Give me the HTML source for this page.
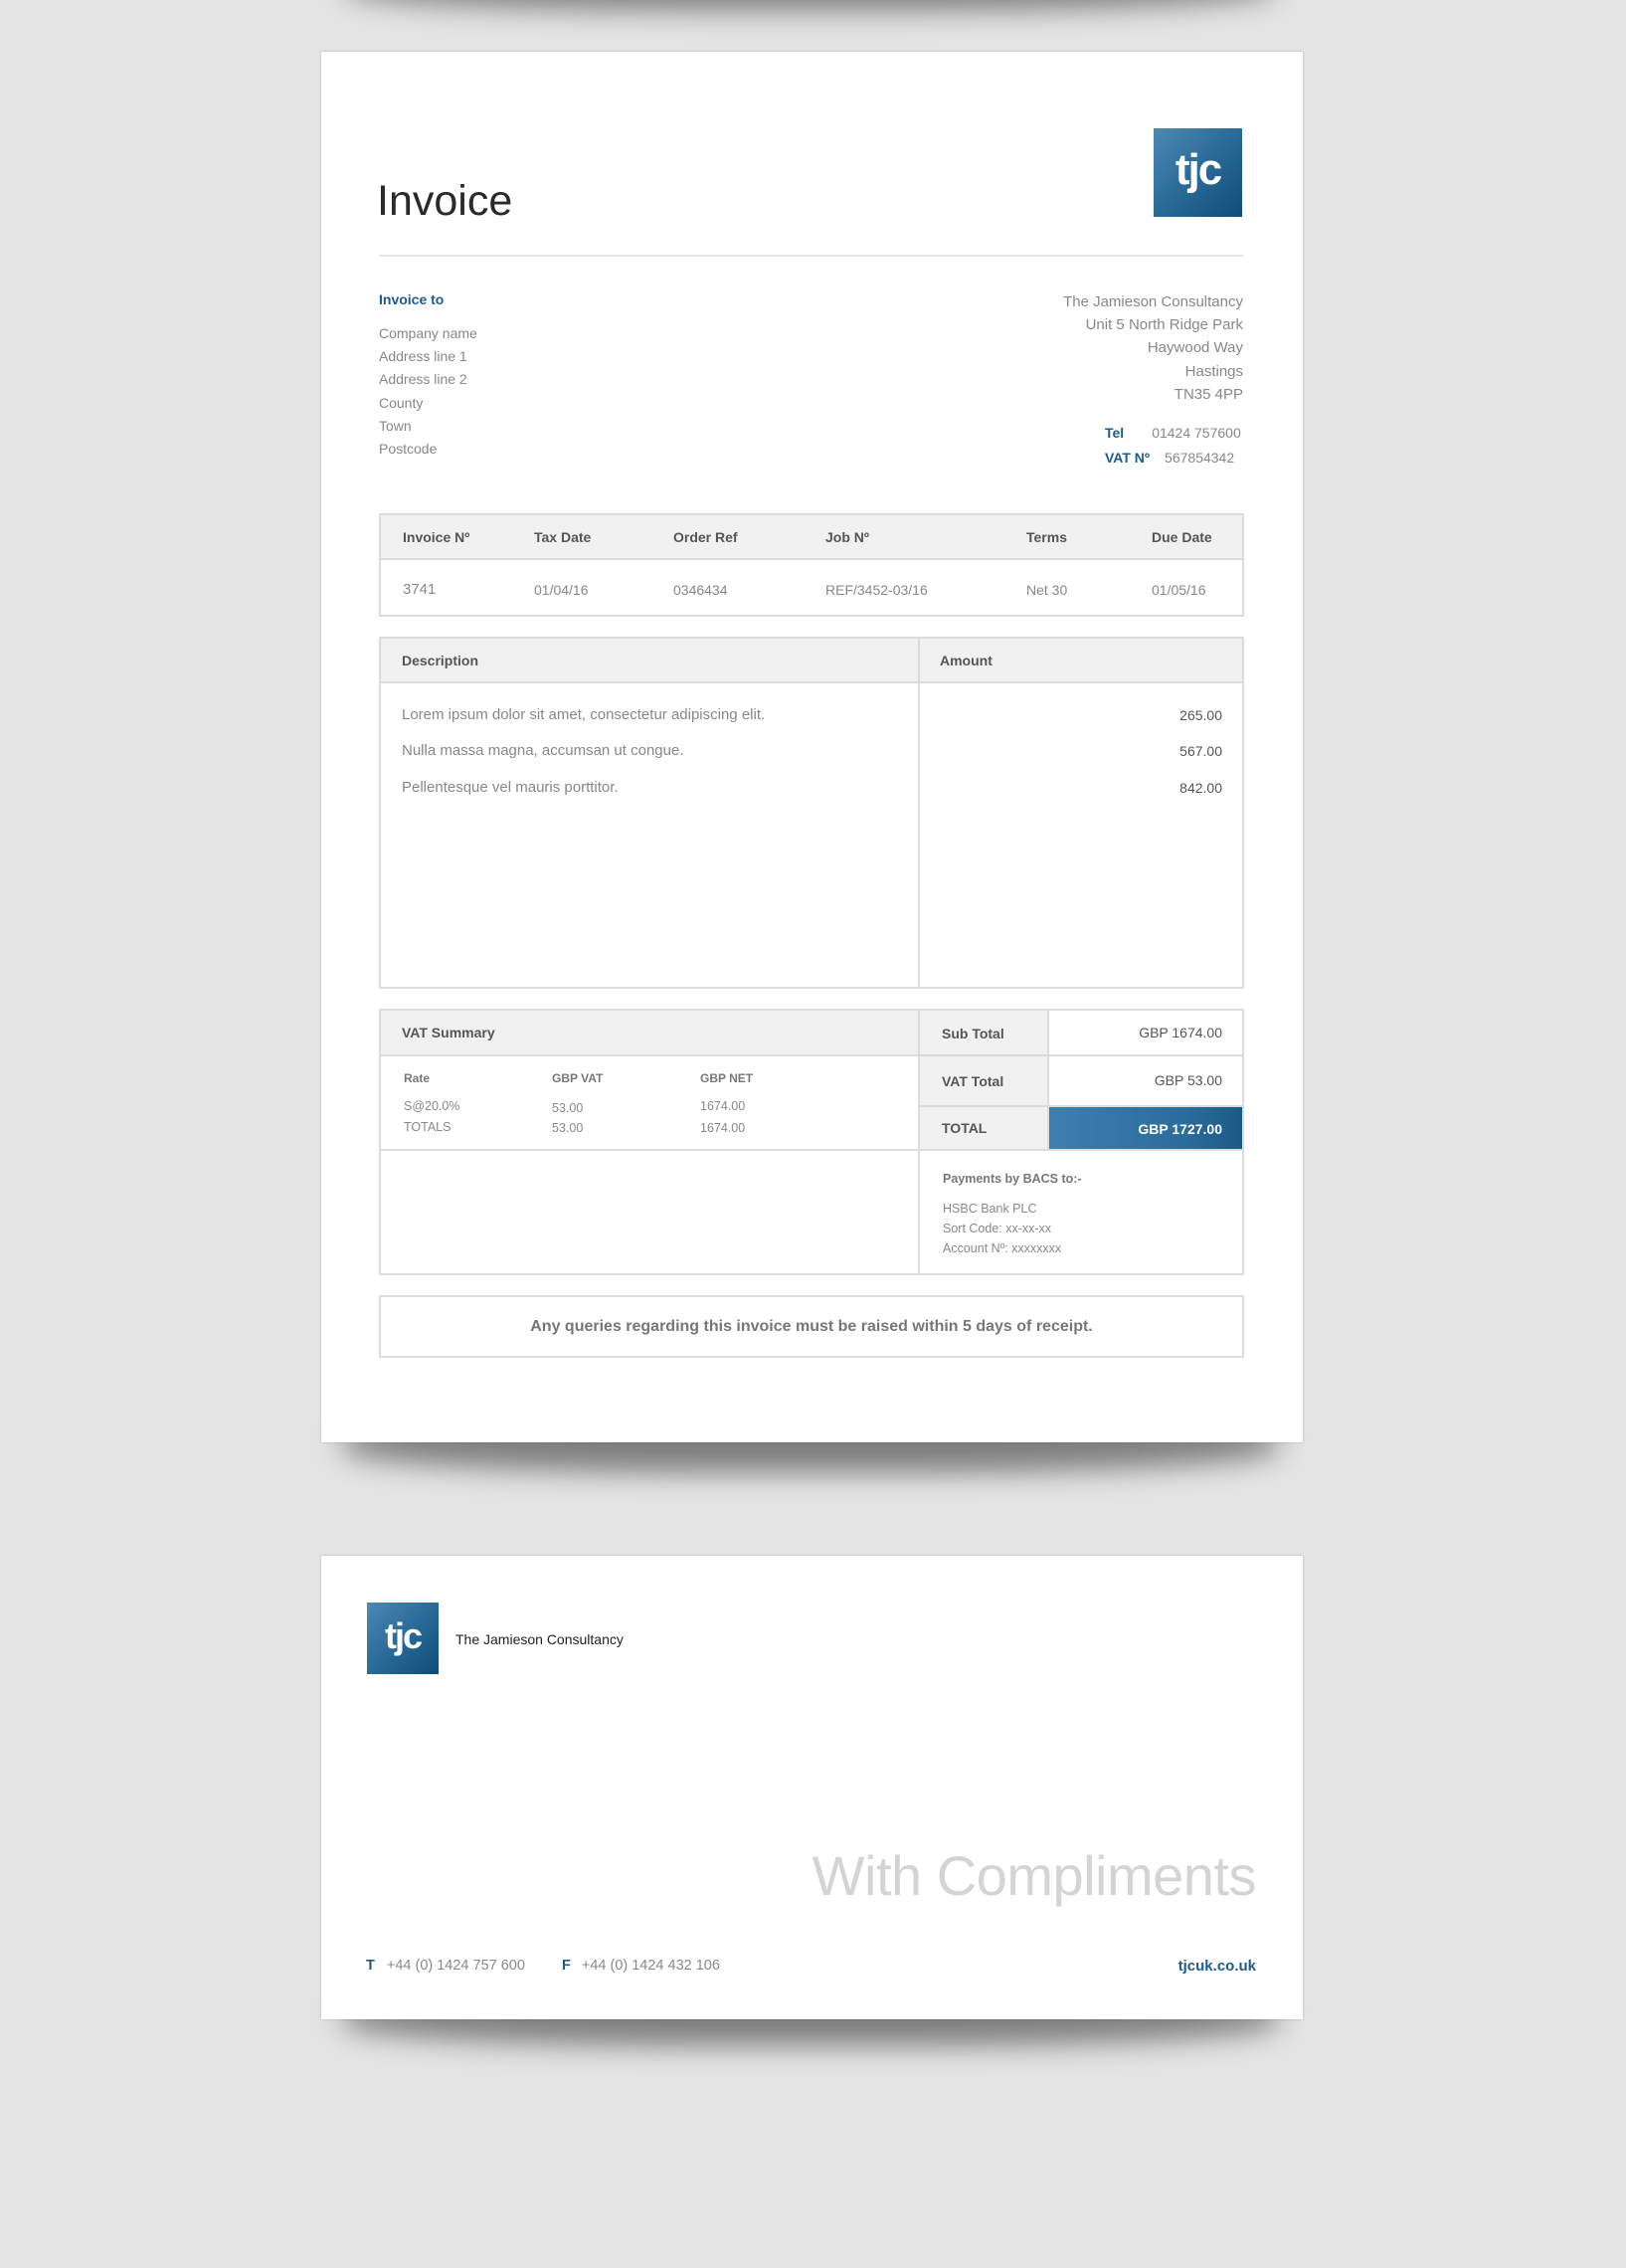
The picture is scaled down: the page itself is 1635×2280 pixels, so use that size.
<!DOCTYPE html>
<html><head><meta charset="utf-8"><style>
*{margin:0;padding:0;box-sizing:border-box}
body{width:1635px;height:2280px;background:#e4e4e4;position:relative;overflow:hidden;font-family:"Liberation Sans",sans-serif;color:#777}
.a{position:absolute;white-space:nowrap}
.page{position:absolute;background:#fff;box-shadow:0 0 2px rgba(0,0,0,.25)}
.sh{position:absolute;background:rgba(0,0,0,.45);filter:blur(14px);border-radius:40%}
.logo{position:absolute;background:linear-gradient(135deg,#4d89b3 0%,#2a6a98 50%,#0e4c76 100%);color:#fff;font-weight:bold;text-align:center;letter-spacing:-2px}
.bx{position:absolute;border:2px solid #dcdcdc}
.hd{position:absolute;background:#f1f1f2}
.ln{position:absolute;background:#dcdcdc}
.b{font-weight:bold;color:#555}
.blue{color:#1e5a8c}
.g{color:#888}
</style></head><body>
<div class="sh" style="left:350px;top:-40px;width:930px;height:50px"></div>
<div class="sh" style="left:345px;top:1420px;width:940px;height:60px"></div>
<div class="sh" style="left:345px;top:2000px;width:940px;height:56px"></div>

<div class="page" style="left:323px;top:52px;width:987px;height:1398px"></div>
<div class="a" style="left:379px;top:178px;font-size:43px;color:#2a2a2a">Invoice</div>
<div class="logo" style="left:1160px;top:129px;width:89px;height:89px;font-size:44px;line-height:84px">tjc</div>
<div class="ln" style="left:381px;top:256px;width:869px;height:2px;background:#e6e6e6"></div>

<div class="a blue" style="left:381px;top:293px;font-size:14px;font-weight:bold">Invoice to</div>
<div class="a g" style="left:381px;top:324px;font-size:14px;line-height:23.2px">Company name<br>Address line 1<br>Address line 2<br>County<br>Town<br>Postcode</div>
<div class="a g" style="right:385px;top:292px;font-size:15px;line-height:23.2px;text-align:right">The Jamieson Consultancy<br>Unit 5 North Ridge Park<br>Haywood Way<br>Hastings<br>TN35 4PP</div>
<div class="a" style="left:1111px;top:427px;font-size:14px"><b class="blue">Tel</b><span class="g" style="margin-left:28px">01424 757600</span></div>
<div class="a" style="left:1111px;top:452px;font-size:14px"><b class="blue">VAT Nº</b><span class="g" style="margin-left:15px">567854342</span></div>

<!-- table 1 -->
<div class="bx" style="left:381px;top:516px;width:870px;height:104px"></div>
<div class="hd" style="left:383px;top:518px;width:866px;height:43px"></div>
<div class="ln" style="left:383px;top:561px;width:866px;height:2px"></div>
<div class="a b" style="left:405px;top:532px;font-size:14px">Invoice Nº</div>
<div class="a b" style="left:537px;top:532px;font-size:14px">Tax Date</div>
<div class="a b" style="left:677px;top:532px;font-size:14px">Order Ref</div>
<div class="a b" style="left:830px;top:532px;font-size:14px">Job Nº</div>
<div class="a b" style="left:1032px;top:532px;font-size:14px">Terms</div>
<div class="a b" style="left:1158px;top:532px;font-size:14px">Due Date</div>
<div class="a g" style="left:405px;top:584px;font-size:15px">3741</div>
<div class="a g" style="left:537px;top:585px;font-size:14px">01/04/16</div>
<div class="a g" style="left:677px;top:585px;font-size:14px">0346434</div>
<div class="a g" style="left:830px;top:585px;font-size:14px">REF/3452-03/16</div>
<div class="a g" style="left:1032px;top:585px;font-size:14px">Net 30</div>
<div class="a g" style="left:1158px;top:585px;font-size:14px">01/05/16</div>

<!-- table 2 -->
<div class="bx" style="left:381px;top:640px;width:870px;height:354px"></div>
<div class="hd" style="left:383px;top:642px;width:866px;height:43px"></div>
<div class="ln" style="left:383px;top:685px;width:866px;height:2px"></div>
<div class="ln" style="left:923px;top:642px;width:2px;height:350px"></div>
<div class="a b" style="left:404px;top:656px;font-size:14px">Description</div>
<div class="a b" style="left:945px;top:656px;font-size:14px">Amount</div>
<div class="a g" style="left:404px;top:710px;font-size:15px">Lorem ipsum dolor sit amet, consectetur adipiscing elit.</div>
<div class="a g" style="left:404px;top:746px;font-size:15px">Nulla massa magna, accumsan ut congue.</div>
<div class="a g" style="left:404px;top:783px;font-size:15px">Pellentesque vel mauris porttitor.</div>
<div class="a" style="right:406px;top:711px;font-size:14px;color:#555">265.00</div>
<div class="a" style="right:406px;top:747px;font-size:14px;color:#555">567.00</div>
<div class="a" style="right:406px;top:784px;font-size:14px;color:#555">842.00</div>

<!-- table 3 -->
<div class="bx" style="left:381px;top:1014px;width:870px;height:268px"></div>
<div class="hd" style="left:383px;top:1016px;width:540px;height:44px"></div>
<div class="ln" style="left:383px;top:1060px;width:540px;height:2px"></div>
<div class="hd" style="left:925px;top:1016px;width:128px;height:139px"></div>
<div class="ln" style="left:923px;top:1016px;width:2px;height:264px"></div>
<div class="ln" style="left:1053px;top:1016px;width:2px;height:140px"></div>
<div class="ln" style="left:925px;top:1060px;width:324px;height:2px"></div>
<div class="ln" style="left:925px;top:1111px;width:324px;height:2px"></div>
<div class="ln" style="left:383px;top:1155px;width:866px;height:2px"></div>
<div style="position:absolute;left:1055px;top:1113px;width:194px;height:42px;background:linear-gradient(90deg,#3f7fad,#2c6c9a 70%,#1b5a86)"></div>
<div class="a b" style="left:404px;top:1030px;font-size:14px">VAT Summary</div>
<div class="a b" style="left:947px;top:1031px;font-size:14px">Sub Total</div>
<div class="a b" style="left:947px;top:1079px;font-size:14px">VAT Total</div>
<div class="a b" style="left:947px;top:1126px;font-size:14px">TOTAL</div>
<div class="a" style="right:406px;top:1030px;font-size:14px;color:#555">GBP 1674.00</div>
<div class="a" style="right:406px;top:1078px;font-size:14px;color:#555">GBP 53.00</div>
<div class="a" style="right:406px;top:1127px;font-size:14px;color:#fff;font-weight:bold">GBP 1727.00</div>
<div class="a b" style="left:406px;top:1077px;font-size:12px;color:#777">Rate</div>
<div class="a b" style="left:555px;top:1077px;font-size:12px;color:#777">GBP VAT</div>
<div class="a b" style="left:704px;top:1077px;font-size:12px;color:#777">GBP NET</div>
<div class="a g" style="left:406px;top:1105px;font-size:12.5px">S@20.0%</div>
<div class="a g" style="left:555px;top:1107px;font-size:12.5px">53.00</div>
<div class="a g" style="left:704px;top:1105px;font-size:12.5px">1674.00</div>
<div class="a g" style="left:406px;top:1126px;font-size:12.5px">TOTALS</div>
<div class="a g" style="left:555px;top:1127px;font-size:12.5px">53.00</div>
<div class="a g" style="left:704px;top:1127px;font-size:12.5px">1674.00</div>
<div class="a b" style="left:948px;top:1178px;font-size:12.5px;color:#777">Payments by BACS to:-</div>
<div class="a g" style="left:948px;top:1205px;font-size:12.5px;line-height:20px">HSBC Bank PLC<br>Sort Code: xx-xx-xx<br>Account Nº: xxxxxxxx</div>

<div class="bx" style="left:381px;top:1302px;width:870px;height:63px"></div>
<div class="a" style="left:381px;width:870px;top:1325px;font-size:16px;font-weight:bold;color:#777;text-align:center">Any queries regarding this invoice must be raised within 5 days of receipt.</div>

<!-- page 2 -->
<div class="page" style="left:323px;top:1564px;width:987px;height:466px"></div>
<div class="logo" style="left:369px;top:1611px;width:72px;height:72px;font-size:36px;line-height:68px">tjc</div>
<div class="a" style="left:458px;top:1640px;font-size:14px;color:#222">The Jamieson Consultancy</div>
<div class="a" style="right:372px;top:1853px;font-size:56px;color:#d4d4d4;letter-spacing:-0.5px">With Compliments</div>
<div class="a" style="left:368px;top:1968px;font-size:14.5px"><b class="blue">T</b><span class="g" style="margin-left:12px">+44 (0) 1424 757 600</span></div>
<div class="a" style="left:565px;top:1968px;font-size:14.5px"><b class="blue">F</b><span class="g" style="margin-left:11px">+44 (0) 1424 432 106</span></div>
<div class="a blue" style="right:372px;top:1968px;font-size:15px;font-weight:bold">tjcuk.co.uk</div>
</body></html>
